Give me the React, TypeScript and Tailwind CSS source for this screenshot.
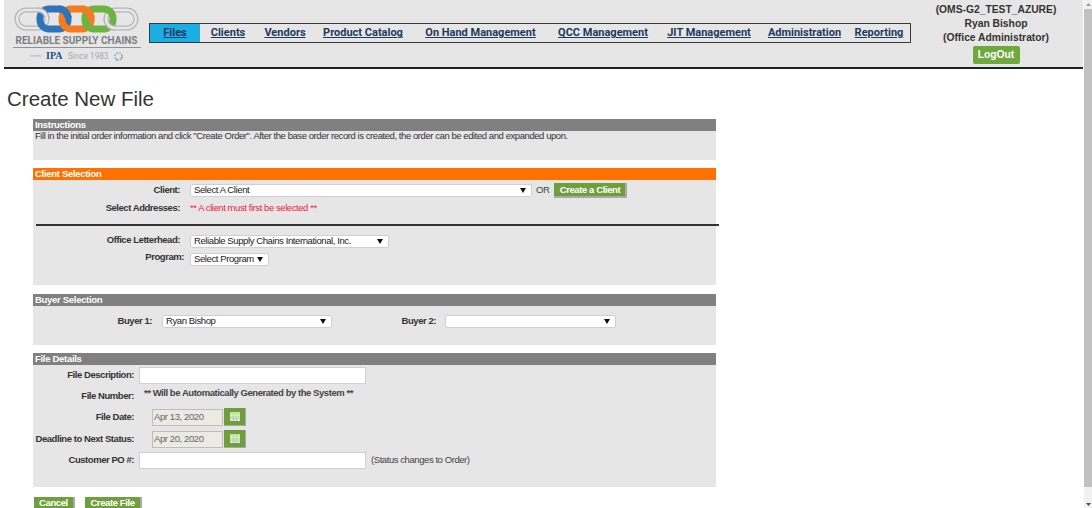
import { ReactNode } from 'react';

const NAV_ITEMS = [
  { label: 'Files', width: 'w-[50px]', active: true },
  { label: 'Clients', width: 'w-[56px]' },
  { label: 'Vendors', width: 'w-[58px]' },
  { label: 'Product Catalog', width: 'w-[98px]' },
  { label: 'On Hand Management', width: 'w-[137px]' },
  { label: 'QCC Management', width: 'w-[108px]' },
  { label: 'JIT Management', width: 'w-[104px]' },
  { label: 'Administration', width: 'w-[87px]' },
  { label: 'Reporting', width: 'w-[62px]' },
];

function Logo() {
  return (
    <div className="w-[145px] flex flex-col items-center shrink-0">
      <svg width="126" height="28" viewBox="0 0 126 28" fill="none" className="mt-[5px]">
        {/* グレーのリンク */}
        <rect x="3" y="5" width="30" height="18" rx="9" stroke="#b4b6b8" strokeWidth="5" />
        <rect x="3" y="5" width="30" height="18" rx="9" stroke="#e8e8e8" strokeWidth="2.5" />
        <rect x="92" y="5" width="30" height="18" rx="9" stroke="#b4b6b8" strokeWidth="5" />
        <rect x="92" y="5" width="30" height="18" rx="9" stroke="#e8e8e8" strokeWidth="2.5" />
        {/* カラーのリンク */}
        <rect x="26" y="4" width="28" height="20" rx="9" stroke="#2f73b8" strokeWidth="7" />
        <rect x="48" y="4" width="29" height="20" rx="9" stroke="#f47b20" strokeWidth="7" />
        <rect x="71" y="4" width="28" height="20" rx="9" stroke="#6cb33f" strokeWidth="7" />
        {/* 重なり */}
        <path d="M45 4a9 9 0 0 1 9 9" stroke="#2f73b8" strokeWidth="7" />
        <path d="M68 4a9 9 0 0 1 9 9" stroke="#f47b20" strokeWidth="7" />
        <path d="M24 5a9 9 0 0 1 9 9" stroke="#b4b6b8" strokeWidth="5" />
        <path d="M24 5a9 9 0 0 1 9 9" stroke="#e8e8e8" strokeWidth="2.5" />
        <path d="M92 14a9 9 0 0 0 9 9" stroke="#b4b6b8" strokeWidth="5" />
        <path d="M92 14a9 9 0 0 0 9 9" stroke="#e8e8e8" strokeWidth="2.5" />
      </svg>
      <div className="w-[128px] mt-[2px] border-b border-[#8f9193] text-center text-[10px] leading-[12px] font-bold text-[#7c7f82] font-['Roboto',sans-serif] whitespace-nowrap">
        RELIABLE SUPPLY CHAINS
      </div>
      <div className="w-full flex items-center pl-[26px] mt-[2px] h-[12px] text-[8.2px] leading-[12px] text-[#a6a8aa] font-['Roboto',sans-serif]">
        <span className="w-[16px] text-[3px] whitespace-nowrap">formerly</span>
        <span className="w-[22px] font-['Liberation_Serif',serif] font-bold text-[10px] text-[#1f4e8c]">IPA</span>
        <span className="w-[46px] whitespace-nowrap">Since 1983</span>
        <svg width="9" height="9" viewBox="0 0 10 10">
          <circle cx="5" cy="5" r="4" fill="none" stroke="#5aa9dc" strokeWidth="1.6" strokeDasharray="1.6 1.6" />
          <circle cx="8.5" cy="6.5" r="1" fill="#f47b20" />
          <circle cx="3" cy="8.5" r="1" fill="#6cb33f" />
          <circle cx="7" cy="1.5" r="1" fill="#f2c230" />
        </svg>
      </div>
    </div>
  );
}

function Nav() {
  return (
    <nav className="flex h-[20px] mt-[23px] w-[762px] border border-[#3a3a3a] bg-[#e6e6e6] font-['Roboto',sans-serif] shrink-0">
      {NAV_ITEMS.map((item) => (
        <a
          key={item.label}
          className={`flex items-center justify-center pt-[1px] text-[11px] font-bold underline text-[#1c3a5e] whitespace-nowrap ${item.width} ${
            item.active ? 'bg-[#19aee4]' : ''
          }`}
        >
          {item.label}
        </a>
      ))}
    </nav>
  );
}

function Select({ width, text }: { width: string; text?: string }) {
  return (
    <div
      className={`${width} h-[13px] bg-white border border-[#cfcfcf] rounded-[2px] flex items-center justify-between pl-[3px] pr-[5px] text-[9.5px] tracking-[-0.4px] text-[#222] whitespace-nowrap`}
    >
      <span>{text}</span>
      <svg width="6" height="5" viewBox="0 0 6 5" className="shrink-0">
        <path d="M0 0h6L3 5z" fill="#111" />
      </svg>
    </div>
  );
}

function GreenButton({ children, className }: { children: ReactNode; className: string }) {
  return (
    <button
      className={`bg-[#6f9f3c] text-white font-bold text-[9.5px] tracking-[-0.4px] leading-none border-r-2 border-b-2 border-[#a9a9a9] flex items-center justify-center shrink-0 ${className}`}
    >
      {children}
    </button>
  );
}

function Section({
  title,
  height,
  orange,
  children,
}: {
  title: string;
  height: string;
  orange?: boolean;
  children: ReactNode;
}) {
  return (
    <section className={`w-[683px] bg-[#e6e6e6] ${height}`}>
      <h3
        className={`h-[12px] pl-[2px] text-[9.5px] tracking-[-0.3px] leading-[11px] font-bold text-white ${
          orange ? 'bg-[#ff7100]' : 'bg-[#808080]'
        }`}
      >
        {title}
      </h3>
      {children}
    </section>
  );
}

function Label({ width, children, className }: { width: string; children: ReactNode; className?: string }) {
  return (
    <label
      className={`${width} shrink-0 text-right font-bold text-[9.5px] tracking-[-0.45px] text-[#333] whitespace-nowrap ${className ?? ''}`}
    >
      {children}
    </label>
  );
}

function CalendarButton() {
  return (
    <span className="w-[22px] h-[18px] bg-[#6f9f3c] border-r border-b border-[#a9a9a9] flex items-center justify-center">
      <svg width="10" height="9" viewBox="0 0 10 9">
        <rect width="10" height="9" fill="#dff0d8" />
        <rect width="10" height="2.5" fill="#c5e39a" />
        <path d="M0 5h10M0 7h10M3.3 2.5V9M6.6 2.5V9" stroke="#9cc47a" strokeWidth="0.6" />
      </svg>
    </span>
  );
}

function DateField({ value }: { value: string }) {
  return (
    <div className="flex items-center ml-[18px] gap-[1px]">
      <div className="w-[71px] h-[17px] bg-[#ebebe4] border border-[#bdbdbd] pl-[1px] flex items-center text-[9.5px] tracking-[-0.4px] text-[#666]">
        {value}
      </div>
      <CalendarButton />
    </div>
  );
}

function App() {
  return (
    <div className="h-[508px] w-[1092px] overflow-hidden flex bg-white font-['Liberation_Sans',Arial,sans-serif]">
      <div className="w-[1084px] shrink-0">
        {/* ヘッダー */}
        <header className="ml-[4px] w-[1079px] h-[69px] bg-[#e6e6e6] border-b-2 border-[#222] flex">
          <Logo />
          <Nav />
          <div className="flex-1 flex flex-col items-center text-[10.3px] leading-[14px] font-bold text-[#333] pt-[3px] pr-[2px]">
            <span>(OMS-G2_TEST_AZURE)</span>
            <span>Ryan Bishop</span>
            <span>(Office Administrator)</span>
            <button className="mt-[1px] w-[47px] h-[18px] rounded-[2px] bg-[#6fa83c] text-white text-[10.3px] font-bold">
              LogOut
            </button>
          </div>
        </header>

        <h1 className="ml-[7px] mt-[18px] text-[20.5px] leading-[24px] text-[#333]">Create New File</h1>

        <div className="ml-[33px] mt-[8px] flex flex-col gap-[8px]">
          <Section title="Instructions" height="h-[41px]">
            <p className="pl-[2px] text-[9.5px] tracking-[-0.43px] leading-[10px] text-[#333]">
              Fill in the initial order information and click "Create Order". After the base order record is created, the
              order can be edited and expanded upon.
            </p>
          </Section>

          <Section title="Client Selection" height="h-[117px] mb-[1px]" orange>
            <div className="flex items-center mt-[4px] h-[13px]">
              <Label width="w-[147px]">Client:</Label>
              <div className="ml-[10px]">
                <Select width="w-[342px]" text="Select A Client" />
              </div>
              <span className="ml-[4px] text-[9.5px] tracking-[-0.4px] text-[#444]">OR</span>
              <GreenButton className="ml-[5px] w-[73px] h-[15px]">Create a Client</GreenButton>
            </div>
            <div className="flex items-center mt-[5px] h-[13px]">
              <Label width="w-[147px]">Select Addresses:</Label>
              <span className="ml-[10px] text-[9.5px] tracking-[-0.43px] text-[#f0243c]">
                ** A client must first be selected **
              </span>
            </div>
            <hr className="w-[683px] ml-[3px] mt-[9px] border-t-2 border-[#333]" />
            <div className="flex items-center mt-[9px] h-[13px]">
              <Label width="w-[147px]" className="-mt-[2px]">
                Office Letterhead:
              </Label>
              <div className="ml-[10px]">
                <Select width="w-[199px]" text="Reliable Supply Chains International, Inc." />
              </div>
            </div>
            <div className="flex items-center mt-[5px] h-[13px]">
              <Label width="w-[151px]" className="-mt-[5px]">
                Program:
              </Label>
              <div className="ml-[6px]">
                <Select width="w-[79px]" text="Select Program" />
              </div>
            </div>
          </Section>

          <Section title="Buyer Selection" height="h-[51px]">
            <div className="flex items-center mt-[9px] h-[13px]">
              <Label width="w-[119px]">Buyer 1:</Label>
              <div className="ml-[10px]">
                <Select width="w-[170px]" text="Ryan Bishop" />
              </div>
              <Label width="w-[104px]">Buyer 2:</Label>
              <div className="ml-[9px]">
                <Select width="w-[171px]" />
              </div>
            </div>
          </Section>

          <Section title="File Details" height="h-[134px]">
            <div className="flex items-center mt-[2px] h-[17px]">
              <Label width="w-[101px]">File Description:</Label>
              <input className="ml-[5px] w-[227px] h-[17px] bg-white border border-[#cfcfcf]" />
            </div>
            <div className="flex items-center mt-[4px] h-[16px]">
              <Label width="w-[101px]">File Number:</Label>
              <span className="ml-[10px] -mt-[6px] text-[9.5px] tracking-[-0.45px] font-bold text-[#444]">
                ** Will be Automatically Generated by the System **
              </span>
            </div>
            <div className="flex items-center mt-[4px] h-[18px]">
              <Label width="w-[101px]">File Date:</Label>
              <DateField value="Apr 13, 2020" />
            </div>
            <div className="flex items-center mt-[4px] h-[18px]">
              <Label width="w-[101px]">Deadline to Next Status:</Label>
              <DateField value="Apr 20, 2020" />
            </div>
            <div className="flex items-center mt-[4px] h-[17px]">
              <Label width="w-[101px]">Customer PO #:</Label>
              <input className="ml-[5px] w-[227px] h-[17px] bg-white border border-[#cfcfcf]" />
              <span className="ml-[5px] text-[9.5px] tracking-[-0.43px] text-[#444]">(Status changes to Order)</span>
            </div>
          </Section>

          <div className="flex gap-[10px] mt-[2px] ml-[1px]">
            <GreenButton className="w-[41px] h-[14px]">Cancel</GreenButton>
            <GreenButton className="w-[57px] h-[14px]">Create File</GreenButton>
          </div>
        </div>
      </div>

      {/* スクロールバー */}
      <div className="w-[8px] h-full bg-[#f1f1f1] flex flex-col items-center pt-[3px]">
        <svg width="5" height="3" viewBox="0 0 5 3" className="shrink-0">
          <path d="M2.5 0L5 3H0z" fill="#9a9a9a" />
        </svg>
        <div className="w-full h-[478px] mt-[3px] bg-[#c1c1c1] shrink-0" />
        <svg width="5" height="3" viewBox="0 0 5 3" className="shrink-0 mt-[16px]">
          <path d="M2.5 3L5 0H0z" fill="#505050" />
        </svg>
      </div>
    </div>
  );
}

export default App;
